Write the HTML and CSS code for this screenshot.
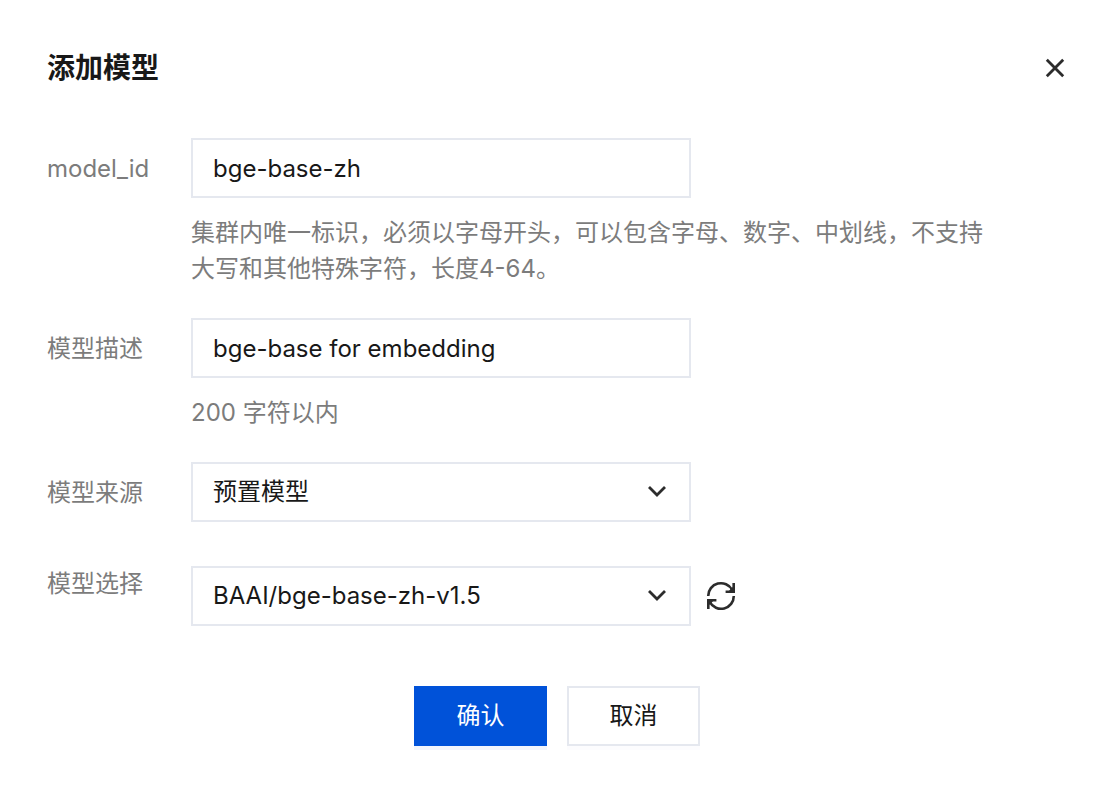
FILE: index.html
```html
<!DOCTYPE html>
<html lang="zh-CN">
<head>
    <meta charset="UTF-8">
    <meta name="viewport" content="width=device-width, initial-scale=1.0">
    <title>添加模型</title>
    <link rel="stylesheet" href="styles.css">
</head>
<body>

    <div class="dialog" role="dialog" aria-labelledby="dialogTitle">
        <div class="dialog-header">
            <h2 id="dialogTitle">添加模型</h2>
            <button type="button" class="icon-button" aria-label="关闭">
                <svg width="22" height="20" viewBox="0 0 22 20" fill="none" stroke="#2c2c2c" stroke-width="2.8">
                    <path d="M1.8 1.8L18.2 18.2M18.2 1.8L1.8 18.2"/>
                </svg>
            </button>
        </div>
        <form class="model-form">
            <div class="form-group">
                <label for="modelId">model_id</label>
                <div class="field">
                    <input type="text" class="control" id="modelId" name="model_id" value="bge-base-zh">
                    <p class="hint">集群内唯一标识，必须以字母开头，可以包含字母、数字、中划线，不支持大写和其他特殊字符，长度4-64。</p>
                </div>
            </div>
            <div class="form-group">
                <label for="modelDesc">模型描述</label>
                <div class="field">
                    <input type="text" class="control" id="modelDesc" name="description" value="bge-base for embedding">
                    <p class="hint">200 字符以内</p>
                </div>
            </div>
            <div class="form-group">
                <label for="modelSource">模型来源</label>
                <div class="field">
                    <div class="select-wrap">
                        <select class="control" id="modelSource" name="source">
                            <option>预置模型</option>
                        </select>
                        <svg class="chevron" width="20" height="14" viewBox="0 0 20 14" fill="none" stroke="#2c2c2c" stroke-width="2.8">
                            <path d="M2 3L10 11L18 3"/>
                        </svg>
                    </div>
                </div>
            </div>
            <div class="form-group model-choice">
                <label for="modelChoice">模型选择</label>
                <div class="field field-row">
                    <div class="select-wrap">
                        <select class="control" id="modelChoice" name="model">
                            <option>BAAI/bge-base-zh-v1.5</option>
                        </select>
                        <svg class="chevron" width="20" height="14" viewBox="0 0 20 14" fill="none" stroke="#2c2c2c" stroke-width="2.8">
                            <path d="M2 3L10 11L18 3"/>
                        </svg>
                    </div>
                    <button type="button" class="icon-button" aria-label="刷新">
                        <svg width="32" height="32" viewBox="0 0 32 32" fill="none" stroke="#2c2c2c" stroke-width="2.6">
                            <path d="M3.2 16A12.8 12.8 0 0 1 27.2 9.8M28.8 16A12.8 12.8 0 0 1 4.8 22.2"/>
                            <path fill="#2c2c2c" stroke="none" d="M30 3V13H20.6V10.4H24.4L27.4 7.4V3ZM2 29V19H11.4V21.6H7.6L4.6 24.6V29Z"/>
                            <path fill="#2c2c2c" stroke="none" d="M24 11L28 7V11ZM8 21L4 25V21Z"/>
                        </svg>
                    </button>
                </div>
            </div>
            <div class="actions">
                <button type="submit" class="button primary">确认</button>
                <button type="button" class="button">取消</button>
            </div>
        </form>
    </div>

</body>
</html>
```

FILE: styles.css
```css
* {
    box-sizing: border-box;
}
body {
    margin: 0;
    background: #fff;
    color: #181818;
    font-family: Inter, "Noto Sans CJK SC", sans-serif;
    font-size: 24px;
    line-height: 36px;
}
.dialog {
    padding: 48px 43px 40px 47px;
}
.dialog-header {
    display: flex;
    justify-content: space-between;
    align-items: center;
    margin-bottom: 50px;
}
.dialog-header h2 {
    margin: 0;
    font-size: 28px;
    line-height: 40px;
    font-weight: bold;
}
.icon-button {
    display: flex;
    padding: 0;
    border: none;
    background: none;
    cursor: pointer;
}
.form-group {
    display: flex;
    margin-bottom: 31px;
}
.form-group label {
    flex: 0 0 144px;
    padding-top: 13px;
    color: #7c7c7c;
}
.field {
    flex: 1;
    max-width: 812px;
}
.control {
    display: block;
    width: 100%;
    max-width: 500px;
    height: 60px;
    padding: 0 20px;
    border: 2px solid #e5e8ef;
    border-radius: 0;
    background: #fff;
    color: #181818;
    font: inherit;
    appearance: none;
}
.hint {
    margin: 17px 0 0;
    color: #7c7c7c;
}
.select-wrap {
    position: relative;
    width: 100%;
    max-width: 500px;
}
.chevron {
    position: absolute;
    right: 24px;
    top: 22px;
    pointer-events: none;
}
.field-row {
    display: flex;
    align-items: center;
    gap: 14px;
}
.model-choice {
    margin: 44px 0 60px;
}
.model-choice label {
    padding-top: 0;
}
.actions {
    display: flex;
    justify-content: center;
    gap: 20px;
}
.button {
    width: 133px;
    height: 60px;
    padding: 0;
    border: 2px solid #e5e8ef;
    background: #fff;
    box-shadow: 0 4px 0 #fcfcfe;
    color: #181818;
    font: inherit;
    cursor: pointer;
}
.primary {
    border-color: #0052d9;
    background: #0052d9;
    box-shadow: 0 4px 0 #f2f6fd;
    color: #fff;
}
```
